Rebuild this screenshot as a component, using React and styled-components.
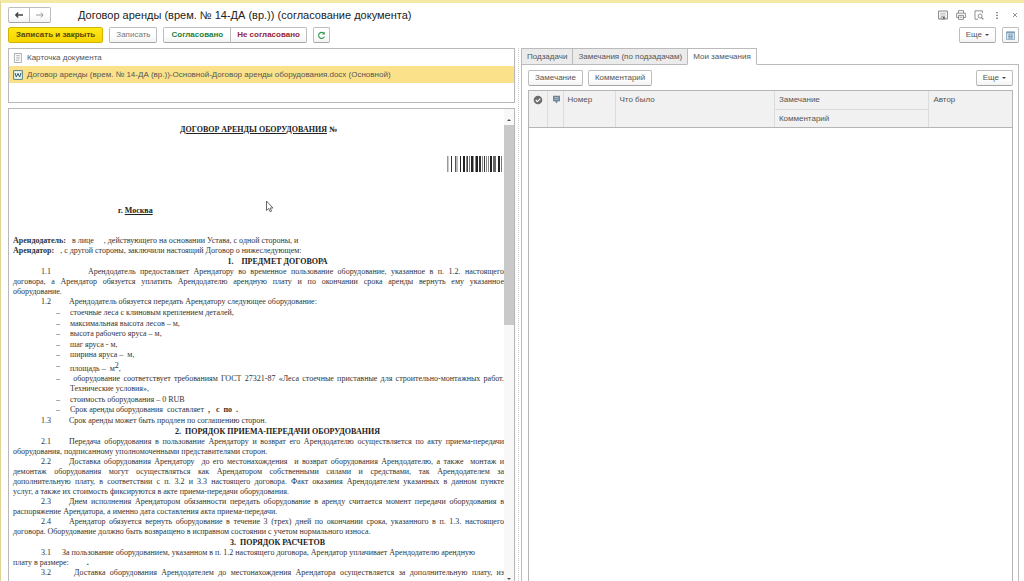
import { useState } from "react";
import styled, { createGlobalStyle, css } from "styled-components";

const GlobalStyle = createGlobalStyle`
  * {
    box-sizing: border-box;
  }
  body {
    margin: 0;
    background: #fff;
    color: #555;
    font: 8px/12px "Liberation Sans", Arial, sans-serif;
  }
  button {
    font: inherit;
    color: inherit;
    cursor: pointer;
  }
`;

const Window = styled.div`
  display: flex;
  flex-direction: column;
  height: 100vh;
  overflow: hidden;
  border-top: 3px solid #f3e9a4;
  border-left: 1px solid #ddd394;
`;

const TitleBar = styled.header`
  display: flex;
  align-items: center;
  height: 24px;
  padding: 0 3px 0 7px;
`;

const Title = styled.h1`
  flex: 1;
  margin: 0 0 0 27px;
  color: #222;
  font-size: 11px;
  line-height: 16px;
  font-weight: 400;
`;

const WindowTools = styled.div`
  display: flex;
  align-items: center;
  gap: 6px;
`;

const IconButton = styled.button`
  display: flex;
  align-items: center;
  justify-content: center;
  width: 12px;
  height: 12px;
  padding: 0;
  border: 0;
  background: none;
`;

const CommandBar = styled.div`
  display: flex;
  align-items: center;
  gap: 6px;
  height: 16px;
  padding: 0 5px 0 7px;
`;

const Spacer = styled.div`
  flex: 1;
`;

const tones = {
  plain: css`
    color: #555;
  `,
  muted: css`
    color: #777;
  `,
  primary: css`
    border-color: #d3b500;
    background: linear-gradient(#ffe817, #f5d500);
    color: #55490a;
    font-weight: 700;
  `,
  approve: css`
    color: #23803a;
    font-weight: 700;
  `,
  reject: css`
    color: #93263a;
    font-weight: 700;
  `,
};

const Button = styled.button`
  display: flex;
  align-items: center;
  justify-content: center;
  height: 16px;
  padding: 0 ${({ $pad }) => $pad ?? 6}px;
  border: 1px solid #bdbdbd;
  border-bottom-color: #a5a5a5;
  border-radius: 2px;
  background: linear-gradient(#fff 50%, #f3f3f3);
  white-space: nowrap;
  ${({ $tone }) => tones[$tone ?? "plain"]}
`;

const ButtonGroup = styled.div`
  display: flex;

  ${Button}:first-child {
    border-radius: 2px 0 0 2px;
  }
  ${Button}:last-child {
    margin-left: -1px;
    border-radius: 0 2px 2px 0;
  }
`;

const Caret = styled.span`
  margin-left: 3px;
  border: 2px solid transparent;
  border-top-color: #444;
  border-bottom: 0;
`;

const Workspace = styled.main`
  display: flex;
  flex: 1;
  min-height: 0;
  padding: 5px 5px 0 7px;
`;

const LeftPane = styled.section`
  display: flex;
  flex: 507 1 0;
  flex-direction: column;
  gap: 5px;
  min-width: 0;
`;

const Splitter = styled.div`
  width: 1px;
  margin: 0 2px 0 3px;
  border-left: 1px dotted #ccc;
`;

const RightPane = styled.section`
  display: flex;
  flex: 498 1 0;
  flex-direction: column;
  min-width: 0;
`;

const FileList = styled.ul`
  height: 55px;
  margin: 0;
  padding: 0;
  border: 1px solid #b9b9b9;
  list-style: none;
`;

const FileRow = styled.button`
  display: flex;
  align-items: center;
  gap: 4px;
  width: 100%;
  height: 17px;
  padding: 0 4px;
  border: 0;
  background: ${({ $active }) => ($active ? "#fbe28a" : "#fff")};
  text-align: left;
  white-space: nowrap;
`;

const Viewer = styled.div`
  display: flex;
  flex: 1;
  min-height: 0;
  border: 1px solid #b9b9b9;
  border-bottom: 0;
`;

const Page = styled.article`
  flex: 1;
  min-width: 0;
  overflow: hidden;
  padding: 15px 0 0 4px;
  color: #333;
  font-family: "Liberation Serif", "Times New Roman", serif;
  font-size: 8px;
  line-height: 10px;
`;

const ScrollBar = styled.div`
  display: flex;
  flex-direction: column;
  align-items: center;
  width: 10px;
  padding-top: 8px;
  background: #f8f8f8;
`;

const ScrollArrow = styled.span`
  margin: 2px 0 4px;
  border: 2px solid transparent;
  ${({ $down }) =>
    $down
      ? "border-top-color: #555; border-bottom: 0; margin: auto 0 1px;"
      : "border-bottom-color: #555; border-top: 0;"}
`;

const Thumb = styled.div`
  width: 100%;
  height: 43%;
  background: #c9c9c9;
`;

const DocTitle = styled.h2`
  margin: 0 0 20px;
  color: #222;
  font-size: 8px;
  line-height: 12px;
  text-align: center;
`;

const BarcodeRow = styled.div`
  display: flex;
  justify-content: flex-end;
  margin-bottom: 34px;
  padding-right: 1px;
`;

const City = styled.p`
  margin: 0 0 20px;
  padding-left: 105px;
  color: #222;
  font-weight: 700;
`;

const Party = styled.p`
  margin: 0;
  white-space: pre;
`;

const Heading = styled.h3`
  margin: 0;
  padding-left: 38px;
  color: #222;
  font-size: 8px;
  line-height: 11px;
  text-align: center;
  white-space: pre;
`;

const Clause = styled.p`
  margin: 0;
`;

const Line = styled.span`
  display: block;
  text-align: justify;
  text-align-last: ${({ $full }) => ($full ? "justify" : "left")};
  white-space: nowrap;
`;

const Number = styled.span`
  display: inline-block;
  width: ${({ $width }) => $width ?? 28}px;
  margin-left: 28px;
  text-align-last: left;
`;

const Terms = styled.ul`
  margin: 0;
  padding: 1px 0 0 43px;
  list-style: none;
`;

const Term = styled.li`
  display: flex;

  &:nth-child(odd) {
    margin-bottom: 1px;
  }
  &::before {
    content: "–";
    flex: 0 0 14px;
  }
  > div {
    flex: 1;
    white-space: pre-wrap;
  }
  sup {
    font-size: 8px;
    line-height: 10px;
    vertical-align: 3px;
  }
`;

const Tabs = styled.div`
  display: flex;
  height: 17px;
`;

const Tab = styled.button`
  padding: 0 5px;
  border: 1px solid #bbb;
  border-right-width: ${({ $active }) => ($active ? 1 : 0)}px;
  border-bottom-color: ${({ $active }) => ($active ? "#fff" : "#bbb")};
  background: ${({ $active }) => ($active ? "#fff" : "#ebebeb")};
  white-space: nowrap;
`;

const TabRule = styled.div`
  flex: 1;
  border-bottom: 1px solid #bbb;
`;

const TabPanel = styled.div`
  display: flex;
  flex: 1;
  flex-direction: column;
  min-height: 0;
  padding: 5px 5px 0 6px;
  border: 1px solid #bbb;
  border-width: 0 1px;
`;

const PanelTools = styled.div`
  display: flex;
  gap: 5px;
  margin-bottom: 4px;
`;

const TableFrame = styled.div`
  flex: 1;
  min-height: 0;
  border: 1px solid #b5b5b5;
  border-bottom: 0;
`;

const Table = styled.table`
  width: 100%;
  table-layout: fixed;
  border-collapse: collapse;

  th {
    height: 18px;
    padding: 3px 4px 2px;
    border: 1px solid #dcdcdc;
    border-top: 0;
    background: #f1f1f1;
    font-weight: 400;
    text-align: left;
    vertical-align: top;
  }
  th:first-child {
    border-left: 0;
  }
  th.last {
    border-right: 0;
  }
  tr:first-child th[rowspan],
  tr:last-child th {
    border-bottom-color: #b5b5b5;
  }
  svg {
    display: block;
    margin-top: 1px;
  }
`;

const Pointer = styled.svg`
  position: fixed;
  top: 200px;
  left: 265px;
  pointer-events: none;
`;

const ArrowIcon = ({ back }) => (
  <svg width="10" height="8" viewBox="0 0 10 8" fill="none" stroke={back ? "#444" : "#999"} strokeWidth={back ? 1.4 : 1}>
    {back ? <path d="M9 4H2M4.2 1.6 1.8 4l2.4 2.4" /> : <path d="M1 4h7M5.8 1.6 8.2 4 5.8 6.4" />}
  </svg>
);

const RefreshIcon = () => (
  <svg width="9" height="9" viewBox="0 0 9 9" fill="none" stroke="#2e9b4c" strokeWidth="1.1">
    <path d="M6.9 2.4A3 3 0 1 0 7.4 5.6" />
    <path d="M7.8.8v2.8H5z" fill="#2e9b4c" stroke="none" />
  </svg>
);

const DiskIcon = () => (
  <svg width="10" height="10" viewBox="0 0 10 10" fill="none" stroke="#777" strokeWidth=".9">
    <path d="M.6 1h8.8v8H.6z" />
    <path d="M2.2 3.2h5.6M2.2 5h5.6" stroke="#999" strokeWidth=".7" />
    <path d="M3 6.6h4V9H3z" fill="#ddd" strokeWidth=".6" />
    <path d="M5 7h1.6v1.8H5z" fill="#555" stroke="none" />
  </svg>
);

const PrinterIcon = () => (
  <svg width="10" height="10" viewBox="0 0 10 10" fill="none" stroke="#777" strokeWidth=".8">
    <path d="M2.5 3V.6h5V3M2.4 7.5H.6V3.2h8.8v4.3H7.6" />
    <path d="M2.5 5.4h5v4h-5zM3.5 7.2h3" />
  </svg>
);

const PreviewIcon = () => (
  <svg width="10" height="10" viewBox="0 0 10 10" fill="none" stroke="#777" strokeWidth=".8">
    <path d="M4 9.2H1V.8h7.4v2.4" />
    <circle cx="6.1" cy="6" r="2" />
    <path d="m7.6 7.6 1.7 1.7" strokeWidth="1.1" />
  </svg>
);

const DotsIcon = () => (
  <svg width="4" height="9" viewBox="0 0 4 9" fill="#666">
    <path d="M1.3 1h1.4v1.3H1.3zM1.3 3.8h1.4v1.3H1.3zM1.3 6.6h1.4v1.3H1.3z" />
  </svg>
);

const CloseIcon = () => (
  <svg width="6" height="6" viewBox="0 0 6 6" stroke="#777" strokeWidth=".8">
    <path d="m1 1 4 4M5 1 1 5" />
  </svg>
);

const GridIcon = () => (
  <svg width="9" height="9" viewBox="0 0 9 9" fill="none" stroke="#7d9fb9" strokeWidth=".8">
    <path d="M.5.8h8v7.6h-8z" fill="#dbe8f1" />
    <path d="M.5 1.6h8" strokeWidth="1.6" />
    <path d="M2 4h5M2 5.5h5M2 7h5M3.6 3v5M5.8 3v5" />
  </svg>
);

const CardIcon = () => (
  <svg width="10" height="10" viewBox="0 0 10 10" fill="#fff" stroke="#999" strokeWidth=".8">
    <path d="M1.4.5h7v9h-7z" />
    <path d="M3.2 2.5h3.6M3.2 4.2h3.6M3.2 5.9h3.6M3.2 7.6h2.6" stroke="#aaa" />
  </svg>
);

const WordIcon = () => (
  <svg width="10" height="10" viewBox="0 0 10 10" fill="none" stroke="#5c8280">
    <path d="M.6.6h8.8v8.8H.6z" fill="#edf4ee" />
    <path d="m2 3 1.3 4L5 3.4 6.7 7 8 3" stroke="#2d5f7c" />
  </svg>
);

const CheckIcon = () => (
  <svg width="10" height="10" viewBox="0 0 10 10">
    <circle cx="5" cy="5" r="4.3" fill="#6d6d6d" />
    <path d="m2.8 5 1.6 1.6 2.9-3" fill="none" stroke="#fff" strokeWidth="1.2" />
  </svg>
);

const NoteIcon = () => (
  <svg width="9" height="9" viewBox="0 0 9 9">
    <path d="M1 .8h7v5.4H5.9L4.5 8.4 3.1 6.2H1z" fill="#6f8598" />
    <path d="M2.4 2.6h4.2M2.4 4.3h4.2" stroke="#c6d2dc" strokeWidth=".7" />
  </svg>
);

// x offset, width and shade of every bar
const bars = [
  [0, 1, "#999"], [1, 1, "#ccc"], [4, 1, "#333"], [8, 1, "#555"], [9, 2, "#bbb"],
  [13, 1, "#222"], [16, 2, "#222"], [19, 1, "#888"], [20, 1, "#444"], [22, 1, "#777"],
  [24, 2, "#222"], [26, 1, "#999"], [28, 1, "#888"], [29, 2, "#222"], [32, 2, "#333"],
  [35, 1, "#888"], [37, 1, "#333"], [39, 1, "#888"], [41, 1, "#888"], [43, 2, "#222"],
  [46, 3, "#666"], [51, 2, "#222"], [54, 1, "#777"],
];

const Barcode = () => (
  <svg width="56" height="16" viewBox="0 0 56 16" role="img" aria-label="Штрихкод">
    {bars.map(([x, width, shade]) => (
      <rect key={x} x={x} width={width} height="16" fill={shade} />
    ))}
  </svg>
);

const files = [
  { name: "Карточка документа", icon: <CardIcon /> },
  {
    name: "Договор аренды (врем. № 14-ДА (вр.))-Основной-Договор аренды оборудования.docx (Основной)",
    icon: <WordIcon />,
  },
];

const tabs = ["Подзадачи", "Замечания (по подзадачам)", "Мои замечания"];

const Paragraph = ({ number, width, lines }) => (
  <Clause>
    {lines.map((line, index) => (
      <Line key={line} $full={index < lines.length - 1 || line.endsWith(" из")}>
        {index === 0 && <Number $width={width}>{number}</Number>}
        {line}
      </Line>
    ))}
  </Clause>
);

const Contract = () => (
  <Page>
    <DocTitle>
      <u>ДОГОВОР АРЕНДЫ ОБОРУДОВАНИЯ</u> №
    </DocTitle>
    <BarcodeRow>
      <Barcode />
    </BarcodeRow>
    <City>
      г. <u>Москва</u>
    </City>
    <Party>
      <b>Арендодатель:</b>{"   в лице     , действующего на основании Устава, с одной стороны, и"}
    </Party>
    <Party>
      <b>Арендатор:</b>{"   , с другой стороны, заключили настоящий Договор о нижеследующем:"}
    </Party>
    <Heading>{"1.    ПРЕДМЕТ ДОГОВОРА"}</Heading>
    <Paragraph
      number="1.1"
      width={47}
      lines={[
        "Арендодатель предоставляет Арендатору во временное пользование оборудование, указанное в п. 1.2. настоящего",
        "договора, а Арендатор обязуется уплатить Арендодателю арендную плату и по окончании срока аренды вернуть ему указанное",
        "оборудование.",
      ]}
    />
    <Paragraph number="1.2" lines={["Арендодатель обязуется передать Арендатору следующее оборудование:"]} />
    <Terms>
      <Term><div>стоечные леса с клиновым креплением деталей,</div></Term>
      <Term><div>максимальная высота лесов – м,</div></Term>
      <Term><div>высота рабочего яруса – м,</div></Term>
      <Term><div>шаг яруса - м,</div></Term>
      <Term><div>{"ширина яруса –  м,"}</div></Term>
      <Term><div>{"площадь –  м"}<sup>2</sup>,</div></Term>
      <Term>
        <div>
          <Line $full>&nbsp;оборудование соответствует требованиям ГОСТ 27321-87 «Леса стоечные приставные для строительно-монтажных работ.</Line>
          <Line>Технические условия»,</Line>
        </div>
      </Term>
      <Term><div>стоимость оборудования – 0 RUB</div></Term>
      <Term><div>{"Срок аренды оборудования  составляет  "}<b>{",   с  по  ."}</b></div></Term>
    </Terms>
    <Paragraph number="1.3" lines={["Срок аренды может быть продлен по соглашению сторон."]} />
    <Heading>{"2.  ПОРЯДОК ПРИЕМА-ПЕРЕДАЧИ ОБОРУДОВАНИЯ"}</Heading>
    <Paragraph
      number="2.1"
      lines={[
        "Передача оборудования в пользование Арендатору и возврат его Арендодателю осуществляется по акту приема-передачи",
        "оборудования, подписанному уполномоченными представителями сторон.",
      ]}
    />
    <Paragraph
      number="2.2"
      lines={[
        "Доставка оборудования Арендатору\u00a0 до его местонахождения\u00a0 и возврат оборудования Арендодателю, а также\u00a0 монтаж и",
        "демонтаж оборудования могут осуществляться как Арендатором собственными силами и средствами, так Арендодателем за",
        "дополнительную плату, в соответствии с п. 3.2 и 3.3 настоящего договора. Факт оказания Арендодателем указанных в данном пункте",
        "услуг, а также их стоимость фиксируются в акте приема-передачи оборудования.",
      ]}
    />
    <Paragraph
      number="2.3"
      lines={[
        "Днем исполнения Арендатором обязанности передать оборудование в аренду считается момент передачи оборудования в",
        "распоряжение Арендатора, а именно дата составления акта приема-передачи.",
      ]}
    />
    <Paragraph
      number="2.4"
      lines={[
        "Арендатор обязуется вернуть оборудование в течение 3 (трех) дней по окончании срока, указанного в п. 1.3. настоящего",
        "договора. Оборудование должно быть возвращено в исправном состоянии с учетом нормального износа.",
      ]}
    />
    <Heading>{"3.  ПОРЯДОК РАСЧЕТОВ"}</Heading>
    <Clause>
      <Line>
        <Number $width={21}>3.1</Number>
        За пользование оборудованием, указанном в п. 1.2 настоящего договора, Арендатор уплачивает Арендодателю арендную
      </Line>
      <Line>
        плату в размере:{"\u00a0".repeat(9)}<b>.</b>
      </Line>
    </Clause>
    <Paragraph
      number="3.2"
      width={33}
      lines={["Доставка оборудования Арендодателем до местонахождения Арендатора осуществляется за дополнительную плату, из"]}
    />
  </Page>
);

const App = () => {
  const [file, setFile] = useState(1);
  const [tab, setTab] = useState(2);

  return (
    <>
      <GlobalStyle />
      <Window>
        <TitleBar>
          <ButtonGroup>
            <Button $pad={5} aria-label="Назад"><ArrowIcon back /></Button>
            <Button $pad={5} aria-label="Вперед"><ArrowIcon /></Button>
          </ButtonGroup>
          <Title>Договор аренды (врем. № 14-ДА (вр.)) (согласование документа)</Title>
          <WindowTools>
            <IconButton aria-label="Сохранить"><DiskIcon /></IconButton>
            <IconButton aria-label="Печать"><PrinterIcon /></IconButton>
            <IconButton aria-label="Просмотр"><PreviewIcon /></IconButton>
            <IconButton aria-label="Меню"><DotsIcon /></IconButton>
            <IconButton aria-label="Закрыть"><CloseIcon /></IconButton>
          </WindowTools>
        </TitleBar>

        <CommandBar>
          <Button $tone="primary" $pad={7}>Записать и закрыть</Button>
          <Button $tone="muted">Записать</Button>
          <ButtonGroup>
            <Button $tone="approve" $pad={7}>Согласовано</Button>
            <Button $tone="reject">Не согласовано</Button>
          </ButtonGroup>
          <Button $pad={3} aria-label="Обновить"><RefreshIcon /></Button>
          <Spacer />
          <Button>Еще<Caret /></Button>
          <Button $pad={3} aria-label="Настройка"><GridIcon /></Button>
        </CommandBar>

        <Workspace>
          <LeftPane>
            <FileList>
              {files.map(({ name, icon }, index) => (
                <li key={name}>
                  <FileRow $active={file === index} onClick={() => setFile(index)}>
                    {icon}
                    {name}
                  </FileRow>
                </li>
              ))}
            </FileList>
            <Viewer>
              <Contract />
              <ScrollBar aria-hidden="true">
                <ScrollArrow />
                <Thumb />
                <ScrollArrow $down />
              </ScrollBar>
            </Viewer>
          </LeftPane>
          <Splitter />
          <RightPane>
            <Tabs role="tablist">
              {tabs.map((name, index) => (
                <Tab key={name} role="tab" aria-selected={tab === index} $active={tab === index} onClick={() => setTab(index)}>
                  {name}
                </Tab>
              ))}
              <TabRule />
            </Tabs>
            <TabPanel role="tabpanel">
              <PanelTools>
                <Button>Замечание</Button>
                <Button>Комментарий</Button>
                <Spacer />
                <Button>Еще<Caret /></Button>
              </PanelTools>
              <TableFrame>
                <Table>
                  <colgroup>
                    <col width="18" />
                    <col width="16" />
                    <col width="52" />
                    <col width="33%" />
                    <col width="32%" />
                    <col />
                  </colgroup>
                  <thead>
                    <tr>
                      <th rowSpan={2} aria-label="Отметка"><CheckIcon /></th>
                      <th rowSpan={2} aria-label="Комментарий"><NoteIcon /></th>
                      <th rowSpan={2}>Номер</th>
                      <th rowSpan={2}>Что было</th>
                      <th>Замечание</th>
                      <th rowSpan={2} className="last">Автор</th>
                    </tr>
                    <tr>
                      <th>Комментарий</th>
                    </tr>
                  </thead>
                </Table>
              </TableFrame>
            </TabPanel>
          </RightPane>
        </Workspace>
      </Window>
      <Pointer width="9" height="13" viewBox="0 0 9 13" fill="#fff" stroke="#555" strokeWidth=".9">
        <path d="M1.5 1v9.5l2.2-2 1.5 3.3 1.4-.7-1.5-3.1h2.8z" />
      </Pointer>
    </>
  );
};

export default App;
